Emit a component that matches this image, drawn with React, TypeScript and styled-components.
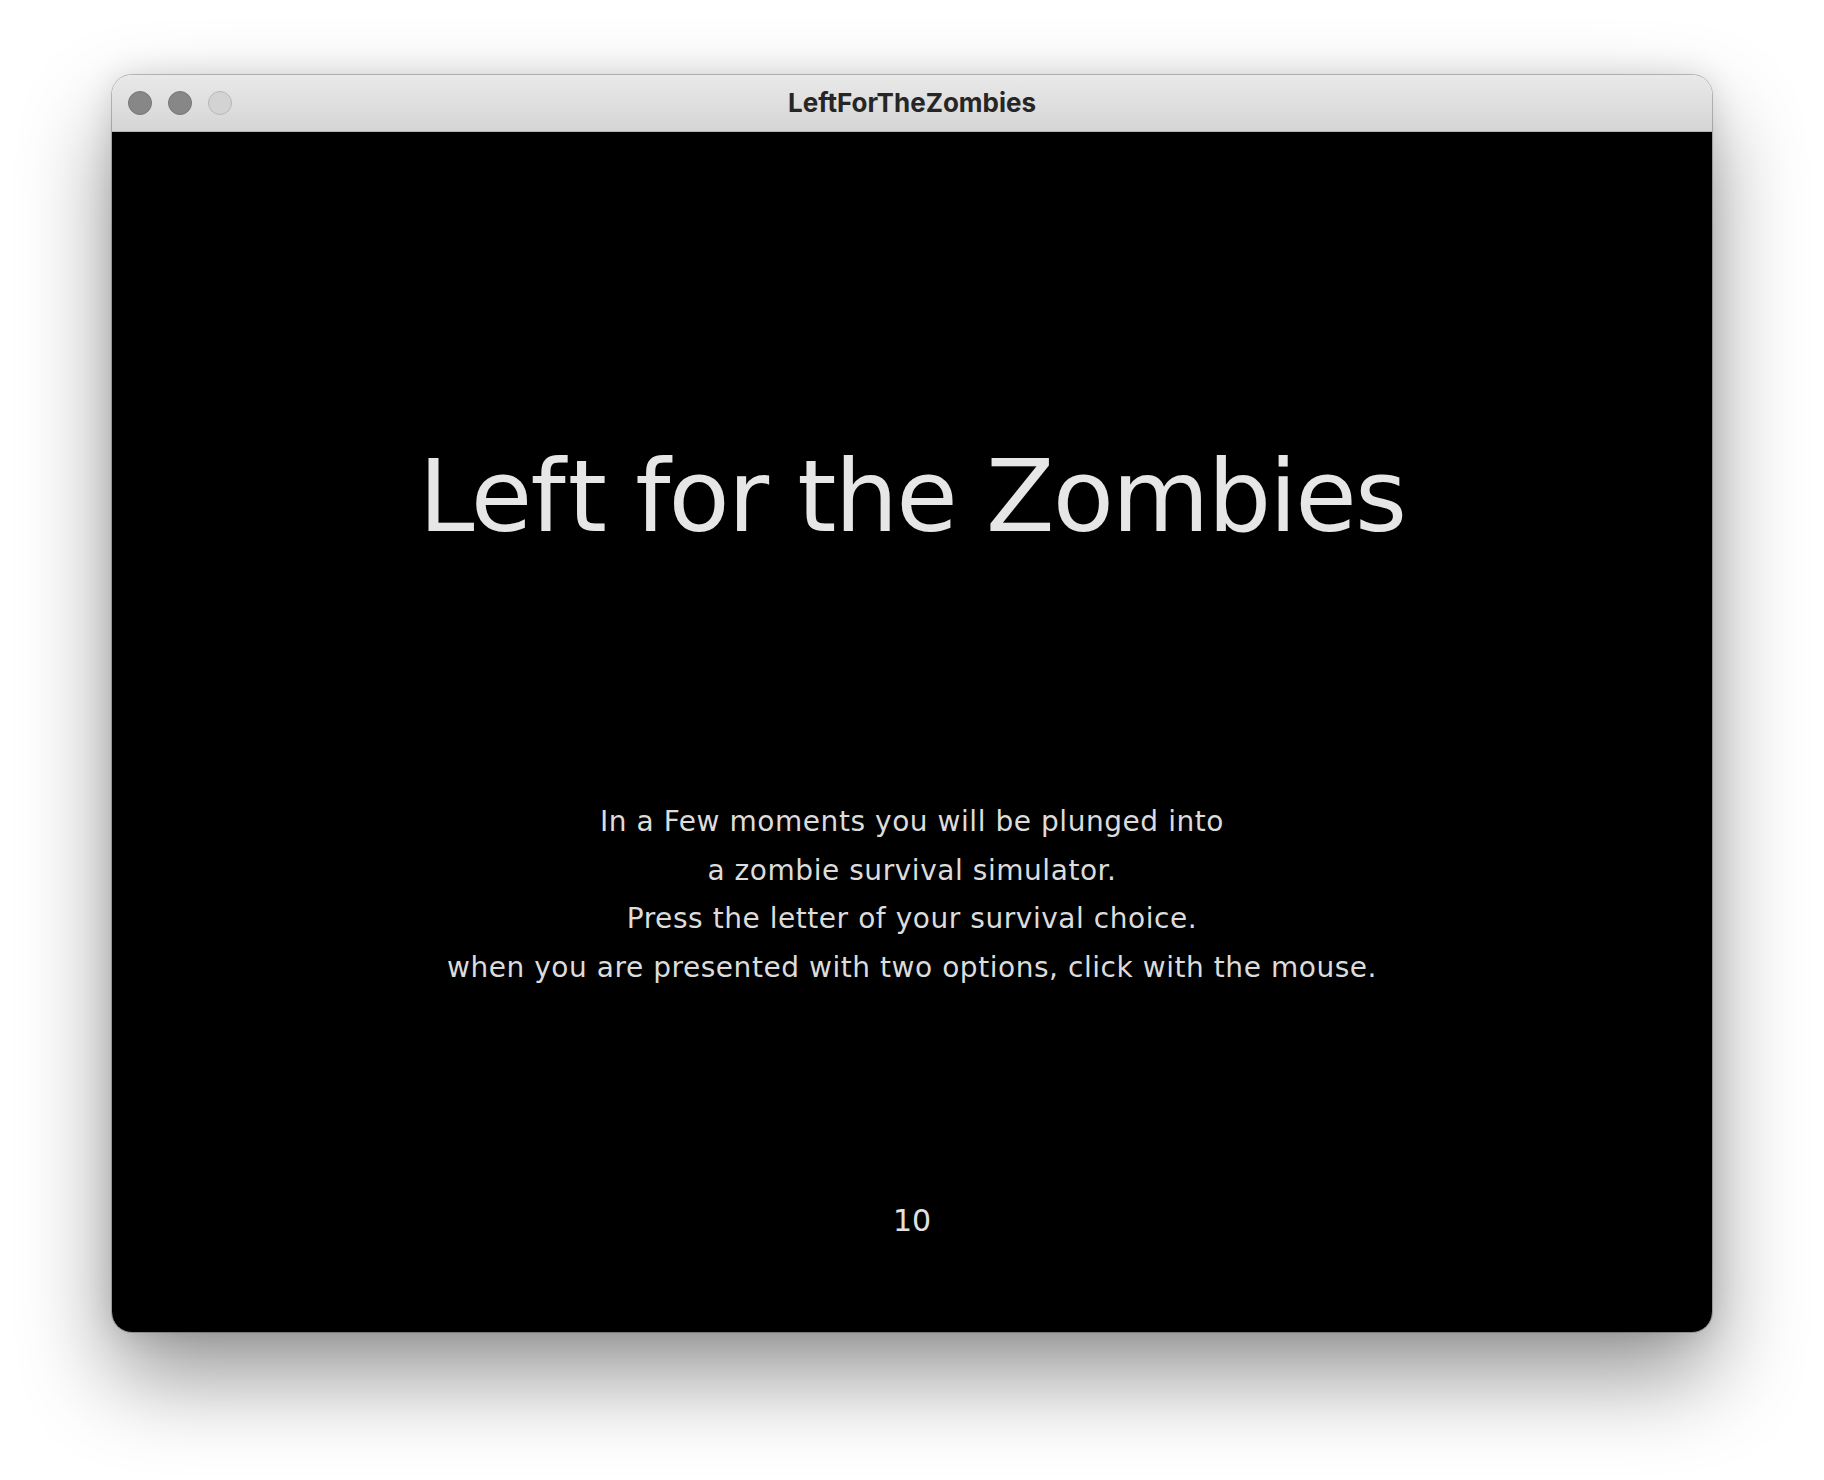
import React from "react";
import styled, { createGlobalStyle } from "styled-components";

const Global = createGlobalStyle`
  html, body { margin: 0; padding: 0; background: #ffffff; }
  body { font-family: "DejaVu Sans", sans-serif; font-variant-ligatures: none; }
`;

const Page = styled.div`
  width: 1824px;
  height: 1480px;
  box-sizing: border-box;
  padding: 75px 0 0 112px;
  background: #ffffff;
  overflow: hidden;
`;

const Window = styled.div`
  width: 1600px;
  border-radius: 20px;
  overflow: hidden;
  display: flex;
  flex-direction: column;
  box-shadow: 0 0 0 1px rgba(0, 0, 0, 0.22), 0 44px 90px rgba(0, 0, 0, 0.42),
    0 0 30px rgba(0, 0, 0, 0.12);
`;

const TitleBar = styled.div`
  height: 56px;
  display: grid;
  grid-template-columns: 1fr auto 1fr;
  align-items: center;
  background: linear-gradient(#e9e9e9, #d5d5d5);
  border-bottom: 1px solid #b4b4b4;
`;

const Lights = styled.div`
  display: flex;
  gap: 16px;
  padding-left: 16px;
`;

const Light = styled.span<{ $dim?: boolean }>`
  width: 24px;
  height: 24px;
  box-sizing: border-box;
  border-radius: 50%;
  background: ${(p) => (p.$dim ? "#d3d3d3" : "#878787")};
  border: 1px solid ${(p) => (p.$dim ? "#b7b7b7" : "#777777")};
`;

const WindowTitle = styled.div`
  font-family: Inter, "Liberation Sans", sans-serif;
  font-weight: 700;
  font-size: 26px;
  line-height: 56px;
  color: #262626;
`;

const Canvas = styled.div`
  height: 1200px;
  background: #000000;
  display: flex;
  flex-direction: column;
  align-items: center;
  font-family: "DejaVu Sans", sans-serif;
  font-variant-ligatures: none;
`;

const GameTitle = styled.h1`
  margin: 315px 0 0 0;
  font-weight: 400;
  font-size: 100px;
  line-height: 100px;
  letter-spacing: -1.8px;
  color: #e6e6e6;
  white-space: nowrap;
`;

const Loose = styled.span`
  letter-spacing: 2px;
`;

const Intro = styled.div`
  margin-top: 251px;
  display: flex;
  flex-direction: column;
  align-items: center;
  font-size: 28px;
  line-height: 48.5px;
  letter-spacing: 0.55px;
  color: #dcdcdc;
`;

const IntroLine = styled.div`
  white-space: nowrap;
`;

const Countdown = styled.div`
  margin-top: 214px;
  font-size: 30px;
  line-height: 30px;
  color: #e0e0e0;
`;

const lines = [
  "In a Few moments you will be plunged into",
  "a zombie survival simulator.",
  "Press the letter of your survival choice.",
  "when you are presented with two options, click with the mouse.",
];

export default function App() {
  return (
    <Page>
      <Global />
      <Window>
        <TitleBar>
          <Lights>
            <Light />
            <Light />
            <Light $dim />
          </Lights>
          <WindowTitle>LeftForTheZombies</WindowTitle>
          <div />
        </TitleBar>
        <Canvas>
          <GameTitle>
            Le<Loose>f</Loose>t for the Zombies
          </GameTitle>
          <Intro>
            {lines.map((l) => (
              <IntroLine key={l}>{l}</IntroLine>
            ))}
          </Intro>
          <Countdown>10</Countdown>
        </Canvas>
      </Window>
    </Page>
  );
}
